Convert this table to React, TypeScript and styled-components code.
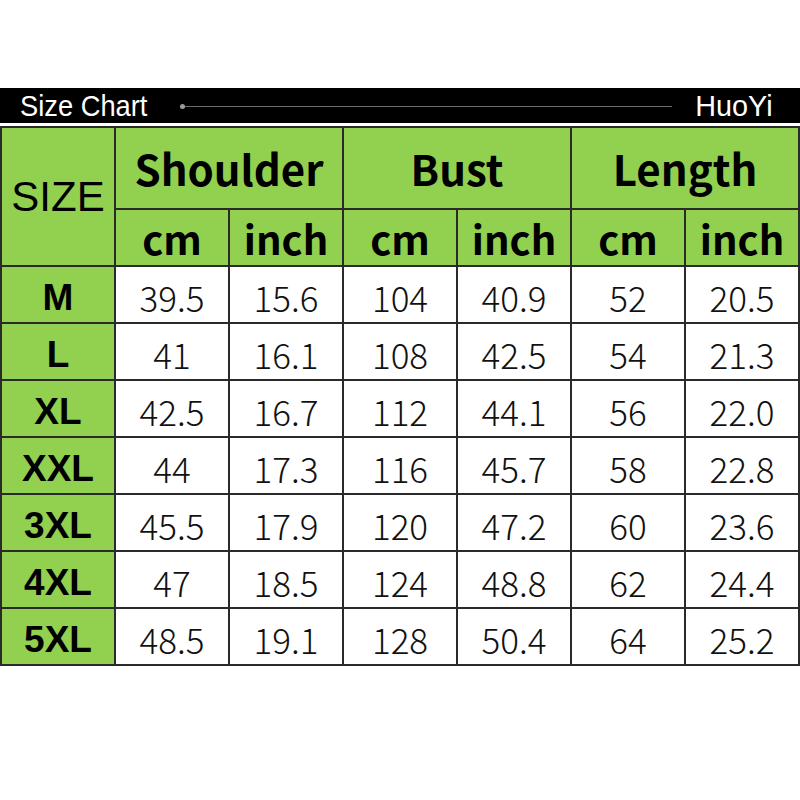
import * as React from 'react'
import styled, { createGlobalStyle } from 'styled-components'

const GlobalStyle = createGlobalStyle`
  html, body {
    margin: 0;
    padding: 0;
    background: #fff;
  }
`

const green = '#92d050'
const line = '#2a2a2a'

const Page = styled.div`
  width: 800px;
  height: 800px;
  padding-top: 88px;
  box-sizing: border-box;
  background: #fff;
`

const TitleBar = styled.div`
  height: 35px;
  background: #000;
  display: flex;
  align-items: center;
  padding: 0 28px 0 20px;
  color: #fff;
  font-family: 'Liberation Sans', Arial, sans-serif;
  font-size: 30px;
`

const Narrow = styled.span<{ $w: number; $scale: number; $right?: boolean }>`
  display: inline-block;
  width: ${p => p.$w}px;
  white-space: nowrap;
  transform: scaleX(${p => p.$scale});
  transform-origin: ${p => (p.$right ? 'right' : 'left')} center;
  text-align: ${p => (p.$right ? 'right' : 'left')};
`

const Rule = styled.div`
  flex: 1;
  height: 1px;
  margin: 2px 20px 0 32px;
  background: #6b6b6b;
  position: relative;
  &::before {
    content: '';
    position: absolute;
    left: -2px;
    top: -2px;
    width: 5px;
    height: 5px;
    border-radius: 50%;
    background: #9a9a9a;
  }
`

const Table = styled.table`
  margin-top: 3px;
  width: 798px;
  border-collapse: collapse;
  table-layout: fixed;
`

const HeadCell = styled.th<{ $h: number; $size: number; $plain?: boolean }>`
  background: ${green};
  border: 2px solid ${line};
  height: ${p => p.$h}px;
  padding: 0;
  color: #000;
  font-family: ${p =>
    p.$plain ? "'Liberation Sans', Arial, sans-serif" : "'Noto Sans CJK SC', 'Noto Sans', sans-serif"};
  font-weight: ${p => (p.$plain ? 400 : 700)};
  font-size: ${p => p.$size}px;
  line-height: 1;
  text-align: center;
  vertical-align: middle;
`

const SizeCell = styled.td`
  background: ${green};
  border: 2px solid ${line};
  height: 50px;
  padding: 5px 0 0;
  font-family: 'Liberation Sans', Arial, sans-serif;
  font-weight: 700;
  font-size: 37px;
  line-height: 1;
  text-align: center;
`

const Value = styled.td`
  background: #fff;
  border: 2px solid ${line};
  padding: 4px 0 0;
  font-family: 'Noto Sans CJK SC', 'Noto Sans', sans-serif;
  font-weight: 300;
  font-size: 35px;
  line-height: 1;
  text-align: center;
  color: #111;
`

const rows: [string, string[]][] = [
  ['M', ['39.5', '15.6', '104', '40.9', '52', '20.5']],
  ['L', ['41', '16.1', '108', '42.5', '54', '21.3']],
  ['XL', ['42.5', '16.7', '112', '44.1', '56', '22.0']],
  ['XXL', ['44', '17.3', '116', '45.7', '58', '22.8']],
  ['3XL', ['45.5', '17.9', '120', '47.2', '60', '23.6']],
  ['4XL', ['47', '18.5', '124', '48.8', '62', '24.4']],
  ['5XL', ['48.5', '19.1', '128', '50.4', '64', '25.2']],
]

const groups = ['Shoulder', 'Bust', 'Length']

export default function App() {
  return (
    <Page>
      <GlobalStyle />
      <TitleBar>
        <Narrow $w={130} $scale={0.91}>
          Size Chart
        </Narrow>
        <Rule />
        <Narrow $w={80} $scale={0.96} $right>
          HuoYi
        </Narrow>
      </TitleBar>
      <Table>
        <colgroup>
          {[0, 1, 2, 3, 4, 5, 6].map(i => (
            <col key={i} style={{ width: 114 }} />
          ))}
        </colgroup>
        <thead>
          <tr>
            <HeadCell $h={80} $size={42} $plain rowSpan={2}>
              SIZE
            </HeadCell>
            {groups.map(g => (
              <HeadCell key={g} $h={80} $size={42} colSpan={2}>
                {g}
              </HeadCell>
            ))}
          </tr>
          <tr>
            {groups.map(g => (
              <React.Fragment key={g}>
                <HeadCell $h={55} $size={40}>cm</HeadCell>
                <HeadCell $h={55} $size={40}>inch</HeadCell>
              </React.Fragment>
            ))}
          </tr>
        </thead>
        <tbody>
          {rows.map(([size, vals]) => (
            <tr key={size}>
              <SizeCell>{size}</SizeCell>
              {vals.map((v, i) => (
                <Value key={i}>{v}</Value>
              ))}
            </tr>
          ))}
        </tbody>
      </Table>
    </Page>
  )
}
